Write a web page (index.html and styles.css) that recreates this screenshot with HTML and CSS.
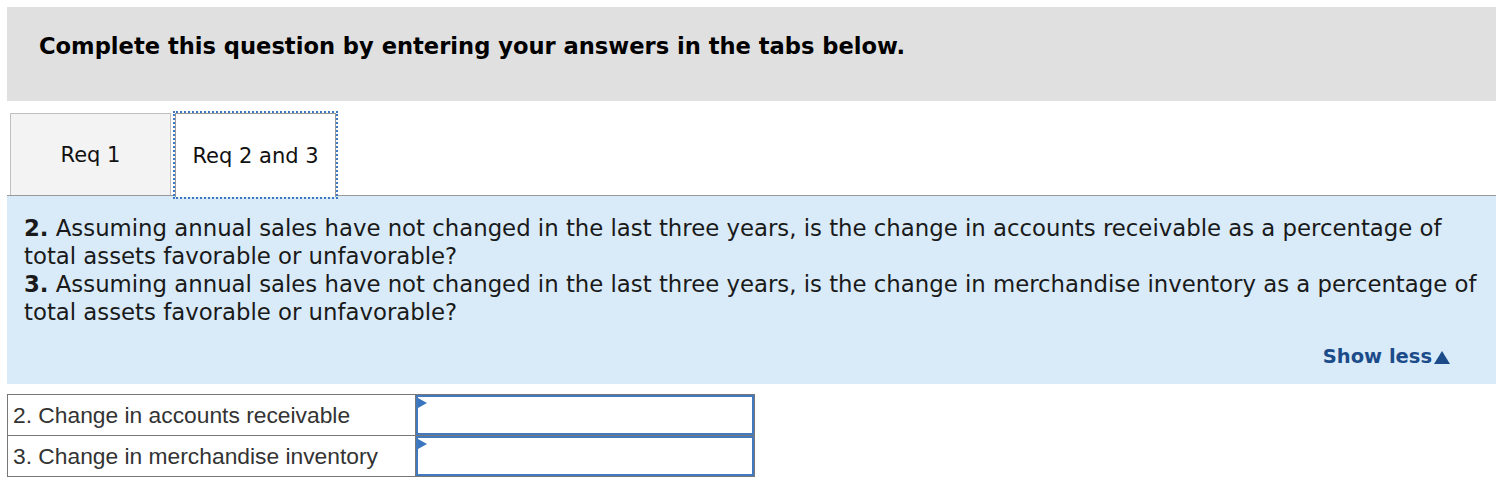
FILE: index.html
```html
<!DOCTYPE html>
<html>
<head>
<meta charset="utf-8">
<link rel="stylesheet" href="styles.css">
</head>
<body>
<div class="header">
  <h1 class="title">Complete this question by entering your answers in the tabs below.</h1>
</div>
<div class="tabs">
  <div class="tab">Req 1</div>
  <div class="tab active">Req 2 and 3</div>
</div>
<div class="panel">
  <p class="q"><b>2.</b> Assuming annual sales have not changed in the last three years, is the change in accounts receivable as a percentage of total assets favorable or unfavorable?<br><b>3.</b> Assuming annual sales have not changed in the last three years, is the change in merchandise inventory as a percentage of total assets favorable or unfavorable?</p>
  <div class="more"><span class="showless">Show less<span class="tri"></span></span></div>
</div>
<table class="answers">
  <tr>
    <td class="label">2. Change in accounts receivable</td>
    <td class="inputcell"><div class="box"><span class="flag"></span></div></td>
  </tr>
  <tr>
    <td class="label">3. Change in merchandise inventory</td>
    <td class="inputcell"><div class="box"><span class="flag"></span></div></td>
  </tr>
</table>
</body>
</html>
```
FILE: styles.css
```css
html, body { background: #fff; }
body {
  margin: 7px 12px 0 7px;
  font-family: "DejaVu Sans", Verdana, sans-serif;
  color: #1a1a1a;
}
.header {
  background: #e0e0e0;
  height: 94px;
  box-sizing: border-box;
  padding: 26px 0 0 32px;
}
.title {
  margin: 0;
  font-size: 22.6px;
  line-height: 26px;
  font-weight: bold;
  color: #000;
}
.tabs {
  display: flex;
  align-items: flex-end;
  margin-top: 12px;
  padding-left: 3px;
  height: 82px;
}
.tab {
  box-sizing: border-box;
  height: 82px;
  width: 161px;
  border: 1px solid #c0c0c0;
  border-bottom: none;
  background: #f3f3f3;
  display: flex;
  align-items: center;
  justify-content: center;
  font-size: 21px;
  color: #111;
}
.tab.active {
  margin-left: 4px;
  border-color: #999;
  background: #fff;
  outline: 2px dotted #3d78c4;
  outline-offset: 0;
  position: relative;
  z-index: 1;
  height: 84px;
  margin-bottom: -2px;
}
.panel {
  border-top: 1px solid #999;
  background: #d9ebf9;
  padding: 18px 10px 13px 17px;
}
.q {
  margin: 0;
  font-size: 22.8px;
  line-height: 28px;
  color: #1a1a1a;
}
.more {
  margin-top: 17px;
  padding-right: 36px;
  display: flex;
  justify-content: flex-end;
  line-height: 28px;
}
.showless {
  font-size: 19.5px;
  font-weight: bold;
  color: #1c4b8a;
  display: inline-flex;
  align-items: center;
}
.tri {
  display: inline-block;
  width: 0;
  height: 0;
  margin-left: 2px;
  margin-top: 1px;
  border-left: 8px solid transparent;
  border-right: 8px solid transparent;
  border-bottom: 13px solid #1c4b8a;
}
.answers {
  margin-top: 10px;
  border-collapse: collapse;
}
.answers td {
  border: 1px solid #777;
  height: 40px;
  padding: 0;
}
.label {
  width: 402px;
  padding-left: 5px !important;
  font-family: "Liberation Sans", Arial, sans-serif;
  font-size: 22.8px;
  color: #333;
}
.inputcell {
  width: 338px;
}
.box {
  position: relative;
  box-sizing: border-box;
  height: 40px;
  border: 2px solid #4279bf;
  background: #fff;
}
.flag {
  position: absolute;
  left: 0;
  top: 1px;
  width: 0;
  height: 0;
  border-top: 5px solid transparent;
  border-bottom: 5px solid transparent;
  border-left: 9px solid #3a75c0;
}
```
